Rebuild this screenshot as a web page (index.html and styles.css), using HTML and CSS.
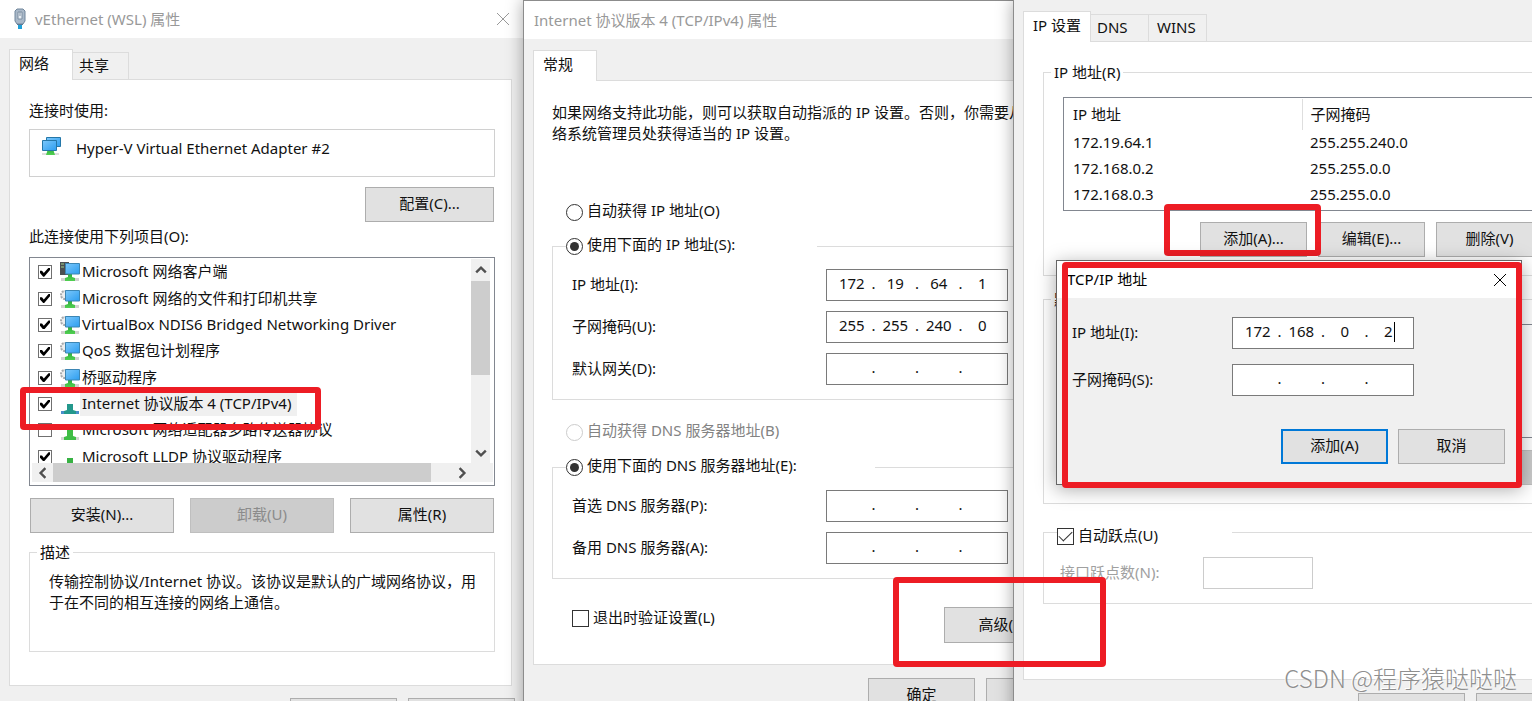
FILE: index.html
```
<!DOCTYPE html>
<html lang="zh-CN">
<head>
<meta charset="utf-8">
<title>vEthernet (WSL) 属性</title>
<link rel="stylesheet" href="styles.css">
</head>
<body>
<svg class="defs" aria-hidden="true">
  <defs>
    <linearGradient id="screen" x1="0" y1="0" x2="1" y2="1">
      <stop offset="0" stop-color="#7cc8fb"/><stop offset="1" stop-color="#2c9df0"/>
    </linearGradient>
    <linearGradient id="stand" x1="0" y1="0" x2="0" y2="1">
      <stop offset="0" stop-color="#2fae3c"/><stop offset="1" stop-color="#52d052"/>
    </linearGradient>
    <symbol id="monitor" viewBox="0 0 20 20">
      <path d="M1 16h18v3H1z" fill="#d2d2d2"/>
      <path d="M8 12h4v3l3 1v3H5v-3l3-1z" fill="url(#stand)"/>
      <path d="M5.500 1.500h14v10.500h-14z" fill="url(#screen)" stroke="#3c86b4"/>
    </symbol>
    <symbol id="client" viewBox="0 0 20 20">
      <path d="M0 0h9v13H0z" fill="#4b4f52"/>
      <path d="M1 2h3M1 5h3" stroke="#9fd08a"/>
      <use href="#monitor"/>
    </symbol>
    <symbol id="service" viewBox="0 0 20 20">
      <circle cx="5" cy="6" r="4" fill="#eee" stroke="#a5a9ac" stroke-width="2" stroke-dasharray="2 1"/>
      <use href="#monitor"/>
    </symbol>
    <symbol id="tcp" viewBox="0 0 20 20">
      <path d="M1 17h18v3H1z" fill="#4a8fcb"/>
      <path d="M7 10h6v6l3 1v3H4v-3l3-1z" fill="#24988c"/>
    </symbol>
    <symbol id="proto" viewBox="0 0 20 20">
      <path d="M1 17h18v3H1z" fill="#d6d6d6"/>
      <path d="M7 9h6v7l3 1v3H4v-3l3-1z" fill="#3fbd46"/>
    </symbol>
    <symbol id="dot" viewBox="0 0 20 20"><path d="M7 11h6v9H7z" fill="#37b243"/></symbol>
    <symbol id="close" viewBox="0 0 14 14"><path d="M1 1l12 12M13 1L1 13" fill="none" stroke="currentColor"/></symbol>
    <symbol id="chev" viewBox="0 0 10 10"><path d="M1 7l4-4 4 4" fill="none" stroke="#505050" stroke-width="2"/></symbol>
  </defs>
</svg>

<main class="desktop">
  <section class="window adapter">
    <header class="titlebar">
      <svg class="plug" viewBox="0 0 12 22"><path d="M4 16h1v5M8 16h-1v5" stroke="#1d9fd8" stroke-width="2" fill="none"/><path d="M3 15h6v2H3z" fill="#4c6f8c"/><path d="M3 1h6l2 2v10l-2 3H3l-2-3V3z" fill="#a9b8c8" stroke="#71869c"/><path d="M4 4h4v7H4z" fill="#e8eef4" stroke="#7d8ea1"/><path d="M6 4v4" stroke="#7d8ea1"/></svg>
      <h1>vEthernet (WSL) 属性</h1>
      <button class="close" type="button" aria-label="关闭"><svg><use href="#close"/></svg></button>
    </header>
    <div class="body">
      <nav class="tabs"><button class="tab active" type="button">网络</button><button class="tab" type="button">共享</button></nav>
      <div class="panel">
        <p class="line">连接时使用:</p>
        <div class="device">
          <svg viewBox="0 0 20 20"><path d="M1 17h17v2H1z" fill="#ddd"/><path d="M5.500 1.500h14v9h-14z" fill="url(#screen)" stroke="#2477a8"/><path d="M7 13h5l2 6H5z" fill="url(#stand)"/><path d="M1.500 4.500h14v10h-14z" fill="url(#screen)" stroke="#2477a8"/></svg>
          <span>Hyper-V Virtual Ethernet Adapter #2</span>
        </div>
        <button class="btn configure" type="button">配置(C)...</button>
        <p class="line">此连接使用下列项目(O):</p>
        <div class="items">
          <div class="viewport">
            <ul>
              <li><label><input class="tick" type="checkbox" checked><svg><use href="#client"/></svg><span>Microsoft 网络客户端</span></label></li>
              <li><label><input class="tick" type="checkbox" checked><svg><use href="#service"/></svg><span>Microsoft 网络的文件和打印机共享</span></label></li>
              <li><label><input class="tick" type="checkbox" checked><svg><use href="#service"/></svg><span>VirtualBox NDIS6 Bridged Networking Driver</span></label></li>
              <li><label><input class="tick" type="checkbox" checked><svg><use href="#service"/></svg><span>QoS 数据包计划程序</span></label></li>
              <li><label><input class="tick" type="checkbox" checked><svg><use href="#service"/></svg><span>桥驱动程序</span></label></li>
              <li class="selected"><label><input class="tick" type="checkbox" checked><svg><use href="#tcp"/></svg><span>Internet 协议版本 4 (TCP/IPv4)</span></label></li>
              <li><label><input class="tick" type="checkbox"><svg><use href="#proto"/></svg><span>Microsoft 网络适配器多路传送器协议</span></label></li>
              <li><label><input class="tick" type="checkbox" checked><svg><use href="#dot"/></svg><span>Microsoft LLDP 协议驱动程序</span></label></li>
            </ul>
          </div>
          <div class="vbar"><svg><use href="#chev"/></svg><i></i><svg class="down"><use href="#chev"/></svg></div>
          <div class="hbar"><svg class="left"><use href="#chev"/></svg><i></i><svg class="right"><use href="#chev"/></svg></div>
          <div class="mark mark-item"></div>
        </div>
        <div class="actions">
          <button class="btn" type="button">安装(N)...</button>
          <button class="btn" type="button" disabled>卸载(U)</button>
          <button class="btn" type="button">属性(R)</button>
        </div>
        <fieldset class="describe">
          <legend>描述</legend>
          <p>传输控制协议/Internet 协议。该协议是默认的广域网络协议，用于在不同的相互连接的网络上通信。</p>
        </fieldset>
      </div>
      <footer class="foot"><button class="btn" type="button" aria-label="确定"></button><button class="btn" type="button" aria-label="取消"></button></footer>
    </div>
  </section>

  <section class="window protocol">
    <header class="titlebar"><h1>Internet 协议版本 4 (TCP/IPv4) 属性</h1></header>
    <div class="body">
      <nav class="tabs"><button class="tab active" type="button">常规</button></nav>
      <div class="panel">
        <p class="intro">如果网络支持此功能，则可以获取自动指派的 IP 设置。否则，你需要从网<br>络系统管理员处获得适当的 IP 设置。</p>
        <label class="choice auto-ip"><input type="radio" name="ip">自动获得 IP 地址(O)</label>
        <fieldset>
          <legend class="wide"><label class="choice"><input type="radio" name="ip" checked>使用下面的 IP 地址(S):</label></legend>
          <div class="rows">
            <div class="row"><label for="ip1">IP 地址(I):</label><span class="ip"><input id="ip1" value="172"><b>.</b><input aria-label="2" value="19"><b>.</b><input aria-label="3" value="64"><b>.</b><input aria-label="4" value="1"></span></div>
            <div class="row"><label for="mask1">子网掩码(U):</label><span class="ip"><input id="mask1" value="255"><b>.</b><input aria-label="2" value="255"><b>.</b><input aria-label="3" value="240"><b>.</b><input aria-label="4" value="0"></span></div>
            <div class="row"><label for="gw1">默认网关(D):</label><span class="ip"><input id="gw1"><b>.</b><input aria-label="2"><b>.</b><input aria-label="3"><b>.</b><input aria-label="4"></span></div>
          </div>
        </fieldset>
        <label class="choice auto-dns"><input type="radio" name="dns" disabled>自动获得 DNS 服务器地址(B)</label>
        <fieldset>
          <legend class="wider"><label class="choice"><input type="radio" name="dns" checked>使用下面的 DNS 服务器地址(E):</label></legend>
          <div class="rows">
            <div class="row"><label for="dns1">首选 DNS 服务器(P):</label><span class="ip"><input id="dns1"><b>.</b><input aria-label="2"><b>.</b><input aria-label="3"><b>.</b><input aria-label="4"></span></div>
            <div class="row"><label for="dns2">备用 DNS 服务器(A):</label><span class="ip"><input id="dns2"><b>.</b><input aria-label="2"><b>.</b><input aria-label="3"><b>.</b><input aria-label="4"></span></div>
          </div>
        </fieldset>
        <div class="validate">
          <label class="choice"><input type="checkbox">退出时验证设置(L)</label>
          <button class="btn" type="button">高级(V)...</button>
        </div>
      </div>
      <footer class="foot"><button class="btn" type="button">确定</button><button class="btn" type="button" aria-label="取消"></button></footer>
    </div>
  </section>

  <section class="window advanced">
    <div class="body">
      <nav class="tabs"><button class="tab active" type="button">IP 设置</button><button class="tab" type="button">DNS</button><button class="tab" type="button">WINS</button></nav>
      <div class="panel">
        <fieldset>
          <legend>IP 地址(R)</legend>
          <div class="listbox">
            <table>
              <thead><tr><th>IP 地址</th><th>子网掩码</th></tr></thead>
              <tbody>
                <tr><td>172.19.64.1</td><td>255.255.240.0</td></tr>
                <tr><td>172.168.0.2</td><td>255.255.0.0</td></tr>
                <tr><td>172.168.0.3</td><td>255.255.0.0</td></tr>
              </tbody>
            </table>
          </div>
          <div class="edit"><button class="btn" type="button">添加(A)...</button><button class="btn" type="button">编辑(E)...</button><button class="btn" type="button">删除(V)</button>
            <div class="mark mark-add"></div>
          </div>
        </fieldset>
        <fieldset class="gateways">
          <legend>默认网关(F):</legend>
          <div class="listbox"></div>
          <div class="edit"><button class="btn" type="button" aria-label="添加"></button><button class="btn" type="button" aria-label="编辑"></button><button class="btn" type="button" aria-label="删除" disabled></button></div>
        </fieldset>
        <fieldset class="metric">
          <legend><label class="choice"><input type="checkbox" checked>自动跃点(U)</label></legend>
          <div class="row"><label for="metric">接口跃点数(N):</label><input id="metric" disabled></div>
        </fieldset>
      </div>
      <footer class="foot"><button class="btn" type="button" aria-label="确定"></button><button class="btn" type="button" aria-label="取消"></button></footer>
    </div>

    <section class="dialog">
      <header class="titlebar"><h2>TCP/IP 地址</h2><button class="close" type="button" aria-label="关闭"><svg><use href="#close"/></svg></button></header>
      <div class="content">
        <div class="row"><label for="ip2">IP 地址(I):</label><span class="ip"><input id="ip2" value="172"><b>.</b><input aria-label="2" value="168"><b>.</b><input aria-label="3" value="0"><b>.</b><input aria-label="4" value="2"><i class="caret"></i></span></div>
        <div class="row"><label for="mask2">子网掩码(S):</label><span class="ip"><input id="mask2"><b>.</b><input aria-label="2"><b>.</b><input aria-label="3"><b>.</b><input aria-label="4"></span></div>
        <div class="confirm"><button class="btn default" type="button">添加(A)</button><button class="btn" type="button">取消</button></div>
      </div>
      <div class="mark mark-dialog"></div>
    </section>
    <div class="mark mark-advanced"></div>
  </section>
  <p class="watermark">CSDN @程序猿哒哒哒</p>
</main>
</body>
</html>
```
FILE: styles.css
```
* { box-sizing: border-box; }
body {
  margin: 0;
  color: #111;
  font: 15px/20px "Noto Sans", "Noto Sans CJK SC", sans-serif;
}
h1, h2, p, ul { margin: 0; padding: 0; font-size: 15px; font-weight: 400; }
button, input { font: inherit; color: inherit; }
.defs { position: absolute; width: 0; height: 0; }

.desktop {
  position: relative;
  display: grid;
  grid-template-columns: 523fr 490fr 519fr;
  height: 100vh;
  overflow: hidden;
  white-space: nowrap;
}

/* Windows: each later one lies over the right part of the one before */
.window { position: relative; min-width: 0; background: #f0f0f0; }
.protocol, .advanced {
  border-left: 1px solid #8c8c8c;
  box-shadow: 0 0 16px rgba(0, 0, 0, .35);
}
.protocol { width: calc(100% + 40px); border-top: 1px solid #8c8c8c; z-index: 1; }
.advanced { width: calc(100% + 60px); z-index: 2; }

.titlebar {
  display: flex;
  align-items: center;
  height: 38px;
  padding-left: 10px;
  background: #fff;
  color: #999;
}
.titlebar h1, .titlebar h2 { padding-bottom: 1px; }
.adapter .titlebar { padding: 0 13px; gap: 8px; }
.plug { width: 14px; height: 22px; }
.close { margin-left: auto; padding: 0; border: 0; background: none; }
.close svg { display: block; width: 14px; height: 14px; }

.body { padding: 11px 11px 0 9px; }
.tabs { display: flex; align-items: flex-end; height: 30px; }
.tab {
  height: 27px;
  padding: 0 19px 2px 6px;
  border: 1px solid #dcdcdc;
  border-width: 1px 1px 0 0;
  background: #f0f0f0;
}
.tab.active {
  position: relative;
  height: 31px;
  margin-bottom: -1px;
  padding: 0 23px 4px 9px;
  border-left-width: 1px;
  background: #fff;
}
.panel { border: 1px solid #dcdcdc; background: #fff; }

.btn {
  flex: none;
  width: 107px;
  height: 35px;
  padding: 0 0 3px;
  border: 1px solid #adadad;
  background: #e1e1e1;
}
.btn:disabled { border-color: #bfbfbf; background: #ccc; color: #8b8b8b; }
.btn.default { border: 2px solid #0078d7; }

fieldset { min-width: 0; margin: 0; padding: 0; border: 1px solid #dcdcdc; }
legend { height: 20px; margin-left: 7px; padding: 0 3px; }
.foot { display: flex; gap: 11px; }
.row { display: flex; align-items: center; }
.row label { padding-bottom: 2px; }

/* Choices: the box hangs slightly below the first text line */
.choice { display: flex; align-items: flex-start; gap: 4px; height: 20px; line-height: 17px; }
.choice input {
  flex: none;
  display: grid;
  place-items: center;
  appearance: none;
  width: 17px;
  height: 17px;
  margin: 2px 0 0;
  border: 1px solid #333;
  background: #fff;
}
.choice input[type="radio"] { border-radius: 50%; }
.choice input[type="radio"]:checked::before {
  content: "";
  width: 9px;
  height: 9px;
  border-radius: 50%;
  background: #333;
}
.choice input[type="checkbox"] { margin-top: 1px; }
.choice input[type="checkbox"]:checked::before {
  content: "";
  width: 12px;
  height: 6px;
  border: solid #333;
  border-width: 0 0 1px 1px;
  transform: translateY(-2px) rotate(-45deg);
}
.choice:has(:disabled) { color: #838383; }
.choice input:disabled { border-color: #ccc; }

/* Four-part address field */
.ip {
  position: relative;
  display: flex;
  width: 182px;
  height: 32px;
  padding: 0 5px 4px;
  border: 1px solid #7a7a7a;
  background: #fff;
}
.ip input {
  width: 40px;
  min-width: 0;
  padding: 0;
  border: 0;
  outline: 0;
  background: none;
  text-align: center;
}
.ip b { width: 4px; font-weight: 400; line-height: 26px; }
.caret { position: absolute; top: 4px; right: 18px; width: 1px; height: 20px; background: #000; }

/* Adapter window */
.adapter .panel { padding: 20px 16px 33px 19px; }
.device {
  display: flex;
  gap: 15px;
  height: 48px;
  margin-top: 9px;
  padding: 6px 11px;
  border: 1px solid #d0d0d0;
}
.device svg { width: 20px; height: 20px; }
.device span { line-height: 24px; }
.configure { display: block; width: 129px; margin: 10px 1px 4px auto; }
.items {
  position: relative;
  display: grid;
  grid-template-columns: 1fr 22px;
  grid-template-rows: 204px 1fr;
  height: 229px;
  margin-top: 11px;
  padding: 1px 1px 1px 2px;
  border: 1px solid #828790;
}
.viewport { overflow: hidden; }
.viewport ul {
  display: grid;
  grid-template-rows: repeat(8, 1fr);
  height: 211px;
  list-style: none;
}
.viewport li { padding-left: 6px; min-height: 0; }
.viewport label { display: flex; align-items: center; height: 100%; }
.viewport svg { width: 20px; height: 20px; margin-left: 8px; }
.viewport span { padding: 0 6px 1px 2px; line-height: 23px; }
.selected span { background: #f0f0f0; }
.tick {
  flex: none;
  display: grid;
  place-items: center;
  appearance: none;
  width: 14px;
  height: 14px;
  margin: 0;
  border: 1px solid #707070;
  background: #fff;
}
.tick:checked::before {
  content: "";
  width: 10px;
  height: 9px;
  background: #000;
  clip-path: polygon(0 35%, 20% 35%, 38% 60%, 85% 0, 100% 0, 100% 25%, 42% 100%, 32% 100%, 0 60%);
}
.items i { background: #cdcdcd; }
.vbar svg, .hbar svg { width: 12px; height: 12px; }
.vbar {
  display: grid;
  grid-template-rows: 22px 94px 1fr;
  justify-items: center;
  align-items: center;
  width: 19px;
  padding-bottom: 4px;
  background: #f0f0f0;
}
.vbar i { width: 100%; height: 100%; }
.vbar .down { align-self: end; transform: rotate(180deg); }
.hbar {
  grid-column: 1 / 3;
  display: grid;
  grid-template-columns: 21px 1fr 62px;
  justify-items: center;
  align-items: center;
  height: 19px;
  background: #f0f0f0;
}
.hbar i { width: 100%; height: 100%; }
.hbar .left { transform: rotate(-90deg); }
.hbar .right { transform: rotate(90deg); }
.actions { display: grid; grid-template-columns: 1fr 1fr 1fr; gap: 16px; margin: 12px 1px 9px; }
.actions .btn { width: auto; }
.describe { height: 110px; }
.describe p { padding: 9px 14px 0 19px; line-height: 21px; white-space: normal; }
.adapter .foot { justify-content: flex-end; margin: 12px -3px 0 0; }

/* Protocol window */
.protocol .panel { padding: 21px 0 21px 18px; }
.intro { line-height: 21px; }
.auto-ip { margin: 58px 0 14px 14px; }
.auto-dns { margin: 22px 0 15px 14px; }
.protocol legend { margin-left: 13px; padding: 0; }
.wide { width: 251px; }
.wider { width: 309px; }
.rows { display: grid; gap: 10px; padding: 13px 0 14px 19px; }
.rows label { width: 254px; }
.validate { display: flex; align-items: flex-start; margin-top: 28px; padding-left: 20px; }
.validate .choice { flex: none; width: 372px; padding-top: 2px; }
.validate .btn { width: 129px; height: 36px; }
.protocol .foot { margin-top: 13px; padding-left: 335px; }

/* Advanced window */
.advanced .panel { padding: 20px 0 75px 19px; }
.advanced .tab { width: 58px; padding: 0 8px 2px; text-align: left; }
.advanced .tab.active { width: 68px; padding: 0 0 4px 9px; }
.advanced .tab.active + .tab { padding-left: 6px; }
.advanced fieldset { padding: 15px 0 18px 19px; }
.advanced legend { margin-left: -12px; }
.listbox { height: 114px; padding: 1px 0; border: 1px solid #828790; }
table { border-collapse: collapse; table-layout: fixed; width: 100%; }
th, td { height: 26px; padding: 0 0 2px 9px; font-weight: 400; text-align: left; }
th { height: 31px; }
th:first-child { width: 238px; border-right: 1px solid #dedede; }
th + th, td + td { padding-left: 8px; }
.edit { position: relative; display: flex; gap: 11px; margin-top: 11px; padding-left: 137px; }
.gateways { margin-top: 13px; }
.gateways .edit { margin-top: 12px; }
.advanced .metric { margin-top: 12px; padding: 9px 0 14px 16px; }
.advanced .metric legend { width: 175px; height: 32px; margin-left: -3px; padding: 11px 0 0; }
.metric .row label { width: 143px; color: #a0a0a0; }
.metric .row input { width: 110px; height: 32px; border: 1px solid #ccc; background: #fff; }
.advanced .foot { margin-top: 13px; padding-left: 335px; }

.dialog {
  position: absolute;
  left: 42px;
  top: 260px;
  width: 466px;
  border: 1px solid #666;
  background: #f0f0f0;
  box-shadow: 0 4px 18px rgba(0, 0, 0, .35);
}
.dialog .titlebar { height: 37px; padding-right: 14px; color: #000; }
.content { display: grid; gap: 15px; padding: 19px 16px 20px 15px; }
.content label { width: 160px; }
.confirm { display: flex; justify-content: flex-end; gap: 10px; margin-top: 18px; }

/* Red markers lie over the windows */
.mark { position: absolute; border: 6px solid #ed1c24; border-radius: 4px; pointer-events: none; }
.mark-item { left: -10px; top: 129px; width: 301px; height: 43px; }
.mark-add { left: 101px; top: -18px; width: 157px; height: 52px; }
.mark-dialog { left: 5px; right: -1px; top: 1px; bottom: -4px; }
.mark-advanced { left: -121px; top: 577px; width: 213px; height: 90px; }

.watermark {
  position: absolute;
  z-index: 3;
  right: 15px;
  bottom: 8px;
  color: #8f8f8f;
  font-family: "Noto Sans CJK SC", sans-serif;
  font-size: 24px;
  font-weight: 300;
  line-height: 30px;
  text-shadow: -1px -1px 0 #fff;
}
```
